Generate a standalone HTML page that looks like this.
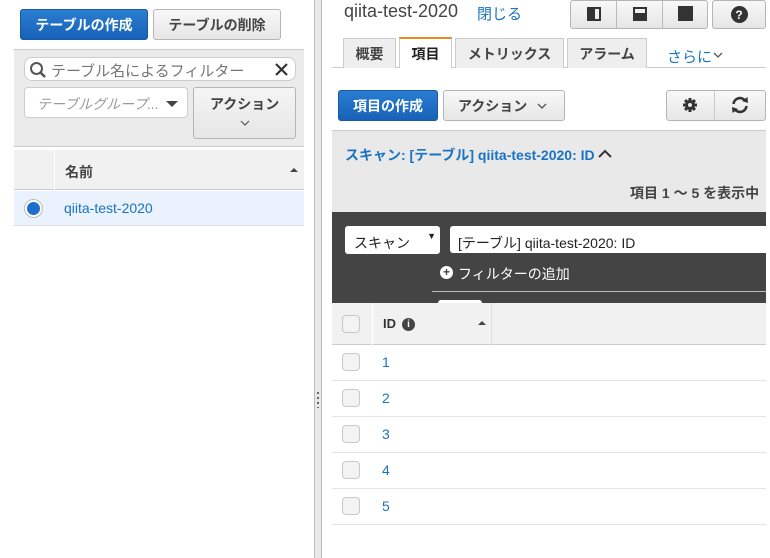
<!DOCTYPE html>
<html><head><meta charset="utf-8"><style>
*{box-sizing:border-box;margin:0;padding:0}
body{width:770px;height:558px;background:#fff;font-family:"Liberation Sans","Noto Sans CJK JP",sans-serif;font-size:14px;color:#444;position:relative;overflow:hidden}
.a{position:absolute}
.btn{position:absolute;border:1px solid #b5b5b5;border-radius:3px;background:linear-gradient(#f8f8f8,#e6e6e6);color:#444;font-weight:bold;font-size:14px;display:flex;align-items:center;justify-content:center}
.pri{background:linear-gradient(#2a7dd1,#1762b8);border-color:#1a5aa3;color:#fff}
.cb{position:absolute;width:18px;height:18px;border:1px solid #c8c8c8;border-radius:4px;background:#f3f3f3}
.row{position:absolute;left:332px;width:434px;height:36px;border-bottom:1px solid #e4e4e4}
.link{color:#1a73c2}
</style></head><body>
<!-- left -->
<div class="btn pri" style="left:20px;top:9px;width:128px;height:31px">テーブルの作成</div>
<div class="btn" style="left:153px;top:9px;width:128px;height:31px">テーブルの削除</div>
<div class="a" style="left:14px;top:49px;width:290px;height:98px;background:#ebebeb;border-top:1px solid #ccc;border-bottom:1px solid #ccc"></div>
<div class="a" style="left:24px;top:57px;width:272px;height:24px;background:#fff;border:1px solid #ccc;border-radius:8px"></div>
<svg class="a" style="left:29px;top:61px" width="18" height="18"><circle cx="7.5" cy="7.5" r="5.5" fill="none" stroke="#555" stroke-width="2"/><path d="M11.5 11.5L16 16" stroke="#555" stroke-width="2.5"/></svg>
<div class="a" style="left:51px;top:60px;font-size:15px;color:#777">テーブル名によるフィルター</div>
<svg class="a" style="left:274px;top:62px" width="15" height="15"><path d="M2 2L13 13M13 2L2 13" stroke="#333" stroke-width="2.2"/></svg>
<div class="a" style="left:24px;top:87px;width:164px;height:31px;background:#fff;border:1px solid #ccc;border-radius:4px"></div>
<div class="a" style="left:37px;top:94px;font-size:14px;color:#999;font-style:italic">テーブルグループ...</div>
<div class="a" style="left:166px;top:101px;border-left:6px solid transparent;border-right:6px solid transparent;border-top:6px solid #444"></div>
<div class="btn" style="left:193px;top:87px;width:103px;height:52px;background:linear-gradient(#f5f5f5,#e6e6e6)"></div>
<div class="a" style="left:210px;top:94px;font-weight:bold;color:#444">アクション</div>
<svg class="a" style="left:240px;top:120px" width="10" height="6"><path d="M1 1L5 5L9 1" fill="none" stroke="#555" stroke-width="1.2"/></svg>
<div class="a" style="left:14px;top:150px;width:290px;height:40px;background:#f1f1f1;border-bottom:1px solid #ccc"></div>
<div class="a" style="left:54px;top:150px;width:1px;height:40px;background:#fff"></div>
<div class="a" style="left:65px;top:162px;font-weight:bold">名前</div>
<div class="a" style="left:290px;top:168px;border-left:4px solid transparent;border-right:4px solid transparent;border-bottom:4px solid #444"></div>
<div class="a" style="left:14px;top:191px;width:290px;height:35px;background:#eaf3fd;border-bottom:1px solid #ddd"></div>
<div class="a" style="left:24px;top:199px;width:19px;height:19px;border-radius:50%;background:#fff;border:1px solid #bbb"></div>
<div class="a" style="left:27px;top:202px;width:13px;height:13px;border-radius:50%;background:#1e6fcc"></div>
<div class="a link" style="left:64px;top:200px">qiita-test-2020</div>
<!-- splitter -->
<div class="a" style="left:314px;top:0;width:8px;height:558px;background:#e8e8e8;border-left:1px solid #bbb;border-right:1px solid #bbb"></div>
<div class="a" style="left:317px;top:392px;width:2px;height:16px;background:repeating-linear-gradient(#666 0 2px,transparent 2px 5px)"></div>
<!-- right header -->
<div class="a" style="left:344px;top:1px;font-size:18px;color:#444">qiita-test-2020</div>
<div class="a link" style="left:477px;top:3px;font-size:15px">閉じる</div>
<div class="btn" style="left:570px;top:0;width:138px;height:29px;padding:0"></div>
<div class="a" style="left:616px;top:0;width:1px;height:29px;background:#bbb"></div>
<div class="a" style="left:662px;top:0;width:1px;height:29px;background:#bbb"></div>
<div class="a" style="left:587px;top:7px;width:14px;height:14px;border:2px solid #333"></div><div class="a" style="left:587px;top:7px;width:8px;height:14px;background:#333"></div>
<div class="a" style="left:633px;top:7px;width:14px;height:14px;border:2px solid #333"></div><div class="a" style="left:633px;top:13px;width:14px;height:8px;background:#333"></div>
<div class="a" style="left:678px;top:6px;width:15px;height:15px;background:#333"></div>
<div class="btn" style="left:712px;top:0;width:54px;height:29px"><span style="width:17px;height:17px;border-radius:50%;background:#333;color:#fff;font-size:12px;display:flex;align-items:center;justify-content:center">?</span></div>
<!-- tabs -->
<div class="a" style="left:332px;top:67px;width:434px;height:1px;background:#ccc"></div>
<div class="a" style="left:343px;top:38px;width:53px;height:30px;background:#eee;border:1px solid #ccc;border-bottom:none;font-weight:bold;display:flex;align-items:center;justify-content:center">概要</div>
<div class="a" style="left:399px;top:37px;width:53px;height:31px;background:#fff;border:1px solid #ccc;border-top:2px solid #e7891f;border-bottom:none;font-weight:bold;color:#222;display:flex;align-items:center;justify-content:center">項目</div>
<div class="a" style="left:455px;top:38px;width:109px;height:30px;background:#eee;border:1px solid #ccc;border-bottom:none;font-weight:bold;display:flex;align-items:center;justify-content:center">メトリックス</div>
<div class="a" style="left:567px;top:38px;width:80px;height:30px;background:#eee;border:1px solid #ccc;border-bottom:none;font-weight:bold;display:flex;align-items:center;justify-content:center">アラーム</div>
<div class="a link" style="left:667px;top:46px;font-size:15px">さらに</div>
<svg class="a" style="left:713px;top:52px" width="10" height="6"><path d="M1 1L5 5L9 1" fill="none" stroke="#555" stroke-width="1.3"/></svg>
<!-- actions -->
<div class="btn pri" style="left:338px;top:90px;width:100px;height:31px">項目の作成</div>
<div class="btn" style="left:443px;top:90px;width:122px;height:31px;justify-content:flex-start;padding-left:14px">アクション</div>
<svg class="a" style="left:537px;top:103px" width="10" height="6"><path d="M1 1L5 5L9 1" fill="none" stroke="#555" stroke-width="1.3"/></svg>
<div class="btn" style="left:666px;top:90px;width:100px;height:31px"></div>
<div class="a" style="left:714px;top:91px;width:1px;height:29px;background:#ccc"></div>
<svg class="a" style="left:682px;top:97px" width="16" height="16" viewBox="0 0 16 16"><g fill="#333"><circle cx="8" cy="8" r="5"/><rect x="6.5" y="1" width="3" height="14"/><rect x="1" y="6.5" width="14" height="3"/><rect x="6.5" y="1" width="3" height="14" transform="rotate(45 8 8)"/><rect x="6.5" y="1" width="3" height="14" transform="rotate(-45 8 8)"/></g><circle cx="8" cy="8" r="2" fill="#eee"/></svg>
<svg class="a" style="left:730px;top:96px" width="20" height="18" viewBox="0 0 20 18"><path d="M3.5 8A6.5 6.5 0 0 1 15 4.5" fill="none" stroke="#333" stroke-width="2.6"/><path d="M16.5 10A6.5 6.5 0 0 1 5 13.5" fill="none" stroke="#333" stroke-width="2.6"/><path d="M12 5L18 7L17.5 1Z" fill="#333"/><path d="M8 13L2 11L2.5 17Z" fill="#333"/></svg>
<!-- scan panel -->
<div class="a" style="left:332px;top:130px;width:434px;height:82px;background:#e9e9e9;border-top:1px solid #ccc"></div>
<div class="a link" style="left:345px;top:145px;font-weight:bold;font-size:14px">スキャン: [テーブル] qiita-test-2020: ID</div>
<svg class="a" style="left:598px;top:149px" width="14" height="9"><path d="M1 8L7 2L13 8" fill="none" stroke="#333" stroke-width="2"/></svg>
<div class="a" style="left:630px;top:183px;font-weight:bold;color:#444">項目 1 ～ 5 を表示中</div>
<div class="a" style="left:332px;top:212px;width:434px;height:91px;background:#444"></div>
<div class="a" style="left:345px;top:226px;width:95px;height:28px;background:#fff;border-radius:3px;padding:7px 0 0 9px;font-size:14px;color:#222">スキャン<span style="position:absolute;right:4px;top:5px;font-size:9px">▼</span></div>
<div class="a" style="left:450px;top:226px;width:316px;height:27px;background:#fff;border-radius:3px 0 0 3px;padding:7px 0 0 8px;font-size:14px;color:#222;overflow:hidden">[テーブル] qiita-test-2020: ID</div>
<div class="a" style="left:440px;top:266px;width:13px;height:13px;border-radius:50%;background:#fff;color:#444;font-size:12px;font-weight:bold;line-height:13px;text-align:center">+</div>
<div class="a" style="left:458px;top:264px;color:#fff;font-size:14px">フィルターの追加</div>
<div class="a" style="left:432px;top:291px;width:334px;height:1px;background:#bbb"></div>
<div class="a" style="left:438px;top:300px;width:44px;height:4px;background:#fff;border-radius:3px 3px 0 0"></div>
<!-- table -->
<div class="a" style="left:332px;top:303px;width:434px;height:42px;background:#f1f1f1;border-bottom:1px solid #ccc"></div>
<div class="a" style="left:372px;top:303px;width:1px;height:42px;background:#fff"></div>
<div class="a" style="left:491px;top:303px;width:1px;height:42px;background:#ddd"></div>
<div class="cb" style="left:342px;top:315px"></div>
<div class="a" style="left:383px;top:316px;font-weight:bold;color:#333;font-size:13px">ID</div>
<div class="a" style="left:402px;top:318px;width:13px;height:13px;border-radius:50%;background:#444;color:#fff;font-size:10px;font-weight:bold;text-align:center;line-height:13px">i</div>
<div class="a" style="left:478px;top:321px;border-left:4px solid transparent;border-right:4px solid transparent;border-bottom:4px solid #444"></div>
<div class="row" style="top:345px"></div><div class="cb" style="left:342px;top:353px"></div><div class="a link" style="left:382px;top:354px">1</div>
<div class="row" style="top:381px"></div><div class="cb" style="left:342px;top:389px"></div><div class="a link" style="left:382px;top:390px">2</div>
<div class="row" style="top:417px"></div><div class="cb" style="left:342px;top:425px"></div><div class="a link" style="left:382px;top:426px">3</div>
<div class="row" style="top:453px"></div><div class="cb" style="left:342px;top:461px"></div><div class="a link" style="left:382px;top:462px">4</div>
<div class="row" style="top:489px"></div><div class="cb" style="left:342px;top:497px"></div><div class="a link" style="left:382px;top:498px">5</div>
</body></html>
